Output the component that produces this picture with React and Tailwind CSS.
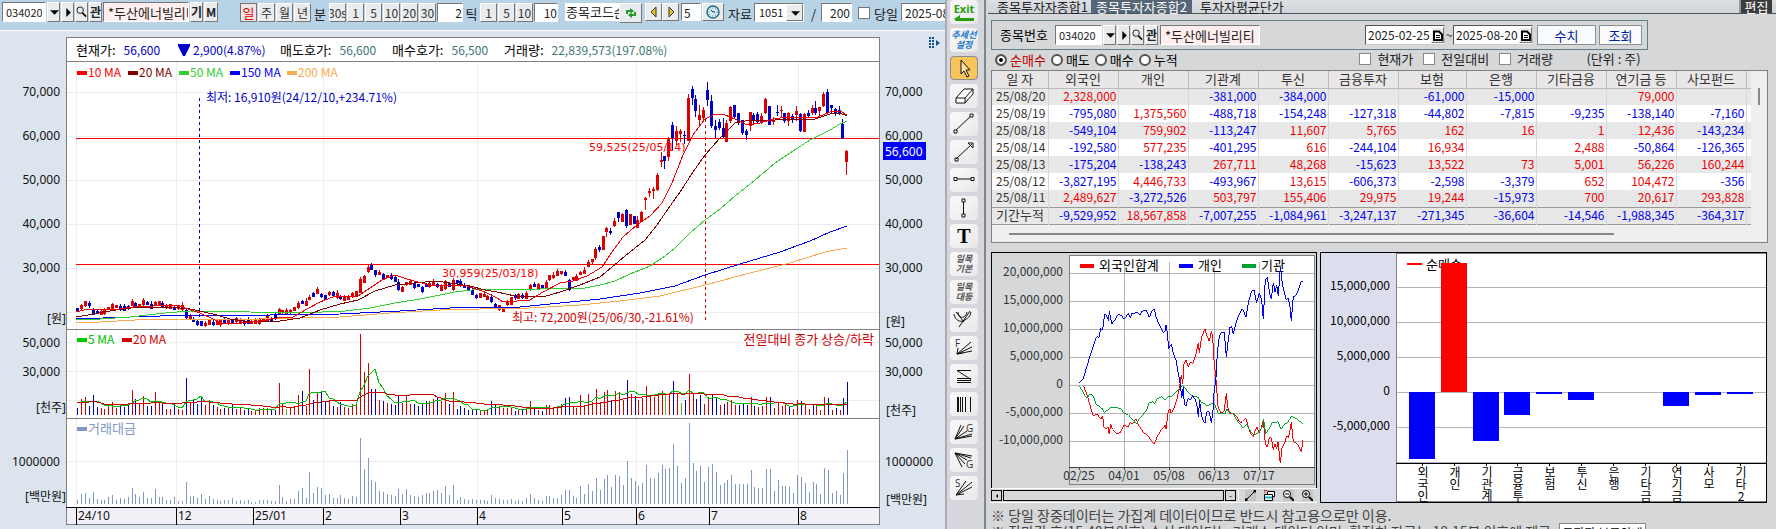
import clsx from "clsx";

const bevel =
  "flex shrink-0 items-center justify-center overflow-hidden border border-t-white border-l-white border-r-[#777] border-b-[#777] bg-[#e9ebed] leading-none";
const sunken =
  "min-w-0 shrink-0 border border-t-[#777] border-l-[#777] border-r-white border-b-white outline-none";

// one entry per session, measured in thirds of a pixel up from the pane floor
const turnover = [
  12, 30, 33, 18, 36, 15, 12, 12, 21, 27, 12, 18, 15, 21, 48, 30, 21, 36, 18, 18,
  45, 21, 21, 12, 12, 21, 9, 9, 66, 21, 24, 18, 30, 15, 24, 15, 12, 9, 12, 12,
  18, 9, 12, 9, 12, 6, 6, 12, 12, 12, 9, 9, 57, 21, 9, 15, 15, 39, 48, 18,
  96, 33, 51, 48, 27, 30, 18, 18, 27, 18, 15, 24, 21, 198, 105, 138, 72, 66, 39, 36,
  30, 27, 24, 45, 30, 45, 27, 24, 21, 27, 33, 33, 39, 42, 33, 54, 27, 57, 12, 21,
  15, 12, 15, 12, 12, 12, 9, 27, 18, 15, 12, 12, 15, 9, 12, 9, 18, 30, 18, 12,
  9, 24, 24, 18, 18, 27, 42, 42, 24, 18, 54, 30, 60, 39, 78, 42, 75, 87, 51, 87,
  84, 57, 129, 78, 69, 54, 63, 117, 78, 75, 93, 117, 105, 108, 180, 114, 63, 78, 243, 123,
  99, 114, 66, 111, 120, 96, 57, 63, 72, 87, 60, 60, 60, 60, 102, 51, 48, 48, 105, 105,
  39, 72, 54, 54, 51, 33, 87, 81, 63, 36, 66, 60, 30, 108, 102, 33, 39, 27, 93, 162,
];

const volume = [
  21, 48, 54, 27, 60, 24, 21, 18, 33, 39, 21, 27, 24, 36, 75, 48, 36, 57, 27, 27,
  69, 36, 36, 18, 18, 36, 18, 15, 111, 39, 45, 33, 54, 30, 45, 30, 24, 18, 21, 21,
  33, 18, 21, 15, 18, 12, 12, 21, 21, 21, 15, 15, 96, 36, 18, 24, 24, 60, 72, 27,
  138, 45, 66, 69, 39, 42, 27, 24, 39, 24, 21, 33, 30, 243, 129, 156, 78, 78, 45, 42,
  36, 33, 30, 60, 36, 57, 33, 33, 27, 36, 42, 42, 48, 51, 42, 66, 33, 69, 18, 27,
  21, 15, 15, 15, 15, 15, 15, 42, 30, 24, 21, 21, 21, 12, 18, 15, 24, 42, 24, 15,
  12, 30, 30, 24, 24, 33, 51, 54, 27, 21, 60, 30, 63, 39, 78, 36, 69, 75, 45, 72,
  69, 45, 105, 63, 57, 45, 51, 87, 57, 54, 60, 72, 66, 63, 102, 63, 36, 45, 123, 66,
  48, 60, 33, 54, 63, 54, 30, 33, 39, 45, 30, 30, 33, 30, 54, 27, 24, 27, 54, 54,
  21, 36, 27, 33, 24, 18, 45, 42, 30, 18, 33, 33, 15, 54, 51, 15, 21, 15, 51, 99,
];

const downDays = new Set([
  0, 3, 4, 5, 11, 12, 13, 15, 18, 19, 22, 25, 28, 30, 31, 32, 35, 38, 40, 43, 44, 50, 51,
  58, 61, 63, 64, 66, 68, 76, 77, 79, 81, 82, 83, 87, 88, 89, 90, 93, 96, 98, 99, 100, 101,
  102, 103, 107, 108, 113, 115, 118, 120, 126, 127, 138, 142, 144, 154, 157, 160, 161, 164,
  165, 167, 171, 172, 173, 175, 179, 184, 187, 190, 194, 196, 198, 199,
]);
const flatDays = new Set([54, 152, 156]);

// middle of the candle body for the quiet sessions
const quiet = [
  628, 622, 612, 615, 636, 636, 639, 635, 625, 620, 620, 624, 625, 622, 610, 612, 617, 608, 611, 618,
  611, 609, 618, 619, 618, 625, 622, 622, 643, 651, 660, 670, 672, 674, 668, 671, 669, 669, 664, 665,
  664, 661, 664, 668, 663, 666, 667, 664, 658, 655, 658, 652, 636, 636, 637, 634, 627, 617, 608, 609,
  594, 584, 576, 588, 592, 581, 582, 586, 594, 594, 594, 586, 580, 557, 538, 507, 502, 519, 521, 530,
  530, 530, 538, 559, 569, 550, 549, 557, 556, 569, 555, 555, 550, 556, 565, 552, 556, 555, 546, 550,
  558, 565, 577, 590, 586, 586, 594, 598, 618, 622, 632, 610, 602, 591, 588, 590, 588, 562, 556, 560,
  560, 555, 534, 529, 519, 517, 522, 553, 536, 534, 520, 515, 493, 482,
];
const tallQuiet = {
  28: [630, 655], 73: [537, 578], 74: [528, 549], 75: [500, 516], 76: [494, 509], 83: [545, 570],
  95: [542, 566], 97: [540, 570], 108: [612, 626], 112: [592, 616], 116: [578, 596], 121: [546, 564],
  127: [540, 570],
};

// [body top, body bottom, high, low, up]
const rally = [
  [538, 564, 530, 568, 1], [530, 538, 525, 546, 0], [498, 540, 498, 540, 1], [474, 486, 470, 500, 1],
  [483, 488, 475, 495, 0], [453, 467, 444, 472, 1], [426, 444, 426, 456, 0], [432, 456, 428, 456, 1],
  [420, 468, 416, 474, 0], [432, 465, 432, 465, 1], [438, 462, 438, 462, 0], [450, 474, 438, 474, 1],
  [426, 456, 422, 456, 1], [383, 390, 380, 420, 1], [363, 369, 353, 380, 1], [358, 365, 350, 386, 1],
  [315, 360, 308, 363, 1], [269, 276, 246, 291, 1], [258, 273, 258, 297, 0], [205, 261, 201, 272, 1],
  [165, 205, 155, 240, 0], [183, 212, 168, 225, 1], [183, 192, 178, 218, 1], [194, 198, 183, 222, 0],
  [83, 213, 72, 213, 1], [57, 84, 48, 105, 0], [87, 123, 75, 141, 0], [135, 150, 105, 165, 1],
  [120, 144, 112, 150, 1], [60, 90, 36, 108, 0], [93, 168, 75, 174, 0], [168, 180, 150, 205, 0],
  [156, 174, 147, 180, 0], [174, 200, 144, 204, 0], [159, 216, 150, 216, 1], [111, 153, 108, 158, 1],
  [105, 141, 105, 146, 0], [129, 156, 129, 165, 0], [150, 189, 150, 195, 0], [184, 195, 176, 210, 0],
  [126, 168, 126, 183, 1], [135, 150, 128, 160, 0], [132, 156, 126, 160, 0], [138, 156, 128, 162, 1],
  [87, 128, 83, 132, 1], [107, 165, 107, 165, 0], [149, 156, 142, 165, 1], [127, 130, 105, 138, 0],
  [121, 124, 108, 142, 1], [129, 153, 129, 160, 0], [129, 153, 126, 168, 1], [138, 147, 132, 160, 0],
  [124, 136, 108, 152, 1], [132, 183, 128, 186, 0], [132, 186, 129, 186, 1], [130, 138, 120, 144, 0],
  [114, 130, 105, 134, 1], [114, 130, 93, 134, 0], [112, 124, 110, 138, 1], [72, 108, 66, 112, 1],
  [66, 129, 57, 134, 0], [106, 114, 104, 130, 0], [117, 132, 114, 138, 0], [120, 130, 108, 134, 0],
  [161, 205, 147, 207, 0], [242, 276, 240, 315, 1],
];

const movingAverages = [
  {
    color: "#fda94f",
    points:
      "76,323 100,322 135,320 180,319 260,319 340,317 390,313 440,310 480,309 530,308 580,305 620,301 660,296 705,285 750,273 790,263 825,252 835,250 847,248",
  },
  {
    color: "#0000f0",
    points:
      "76,319 130,317 190,315 270,315 340,314 400,311 450,308 480,307 520,307 560,303 600,299 640,293 675,286 705,275 740,264 780,252 810,241 830,232 847,226",
  },
  {
    color: "#32cd32",
    points:
      "76,320 100,319 130,317 165,313 190,311 250,312 300,313 345,311 370,308 395,303 420,299 455,292 480,289 540,289 560,288 585,288 600,285 615,281 630,274 650,266 665,256 675,248 690,233 705,220 720,209 735,196 755,180 775,163 790,153 810,140 830,130 840,124 847,121",
  },
  {
    color: "#800000",
    points:
      "76,317 88,315 103,312 123,309 140,307 170,307 190,309 213,314 230,319 245,321 265,322 280,321 300,318 320,310 340,304 358,300 375,291 395,285 415,283 435,281 450,283 470,286 485,290 497,292 515,296 543,297 560,292 580,285 600,277 612,267 625,256 645,240 657,225 668,209 680,192 693,172 705,155 720,138 735,123 750,120 775,120 800,119 815,119 830,114 840,113 847,116",
  },
  {
    color: "#f00000",
    points:
      "76,312 88,309 98,310 120,309 133,307 153,306 167,305 180,306 188,309 200,313 213,319 222,323 240,323 260,321 277,318 293,317 307,309 320,302 333,297 347,296 358,296 370,288 382,280 395,275 410,280 430,285 450,285 467,286 485,292 497,298 503,302 517,301 530,300 543,292 560,283 573,281 587,276 602,267 612,252 623,237 637,225 650,216 662,203 672,183 683,155 693,135 705,119 715,114 725,115 735,119 747,125 760,123 773,119 788,117 803,117 818,117 830,112 840,111 847,115",
  },
];

const months = [
  [76, "24/10"], [176, "12"], [253, "25/01"], [323, "2"], [400, "3"],
  [477, "4"], [562, "5"], [636, "6"], [709, "7"], [798, "8"],
];

const axisLabels = [
  [96, "70,000"], [140, "60,000"], [184, "50,000"], [228, "40,000"], [272, "30,000"],
  [323, "[원]"], [347, "50,000"], [376, "30,000"], [412, "[천주]"], [466, "1000000"], [501, "[백만원]"],
];

const sessionX = (i) => Math.round((232 + i * 11.608) / 3);

function averageLine(values, span, floor) {
  return values
    .map((_, i) => {
      const slice = values.slice(Math.max(0, i - span + 1), i + 1);
      // the first few sessions have no history, so lean on the opening level
      const pad = Math.max(0, Math.min(span, 6) - slice.length);
      const total = slice.reduce((sum, v) => sum + v, 0) + pad * 40;
      return `${sessionX(i)},${Math.round(floor - total / (slice.length + pad) / 3)}`;
    })
    .join(" ");
}

function Candle({ x, top, bottom, high, low, up }) {
  const color = up ? "#dc0000" : "#0000c8";
  return (
    <g fill={color}>
      <rect x={x} y={Math.round(high)} width="1" height={Math.max(1, Math.round(low - high))} />
      <rect x={x - 1} y={Math.round(top)} width="3" height={Math.max(1, Math.round(bottom - top))} />
    </g>
  );
}

function StockChart() {
  return (
    <svg
      viewBox="0 61 945 468"
      className="block w-full"
      fontFamily="'Noto Sans', 'Noto Sans CJK KR', sans-serif"
      fontSize="12"
      role="img"
      aria-label="두산에너빌리티 일봉 차트"
    >
      <g shapeRendering="crispEdges">
        <rect x="66" y="61" width="814" height="447" fill="#fff" />
        <rect x="66" y="507" width="814" height="18" fill="#f0f0f6" />
        <g stroke="#ededed">
          {[76, 176, 323, 477, 636, 798].map((x) => (
            <path key={x} d={`M${x + 0.5} 62V507`} />
          ))}
          {[92, 136, 180, 224, 268, 312, 342, 371, 400, 461].map((y) => (
            <path key={y} d={`M67 ${y + 0.5}H879`} />
          ))}
        </g>
        <path d="M66.5 61V525M879.5 61V525M66 61.5H880M66 329.5H880M66 418.5H880M66 524.5H880" stroke="#808080" fill="none" />
        <path d="M66 507.5H880" stroke="#000" />
        <path d="M199.5 98V320" stroke="#0000c8" strokeDasharray="3 3" />
        <path d="M76 138.5H879M76 264.5H879" stroke="#f00" />

        {quiet.map((mid, i) => {
          const half = 4 + ((i * 7) % 5);
          const [top, bottom] = tallQuiet[i] || [mid - half, mid + half];
          return (
            <Candle
              key={i}
              x={sessionX(i)}
              top={100 + top / 3}
              bottom={100 + bottom / 3}
              high={100 + (top - ((i * 5) % 8)) / 3}
              low={100 + (bottom + ((i * 3) % 6)) / 3}
              up={!downDays.has(i)}
            />
          );
        })}
        {rally.map(([top, bottom, high, low, up], i) => (
          <Candle
            key={i}
            x={sessionX(i + quiet.length) - 1}
            top={70 + top / 3}
            bottom={70 + bottom / 3}
            high={70 + high / 3}
            low={70 + low / 3}
            up={up}
          />
        ))}
        {movingAverages.map((line) => (
          <polyline key={line.color} points={line.points} fill="none" stroke={line.color} />
        ))}
        <path d="M705.5 119V320" stroke="#c80000" strokeDasharray="3 3" />

        {volume.map((v, i) => (
          <rect
            key={i}
            x={sessionX(i)}
            y={Math.round(415 - v / 3)}
            width="1"
            height={Math.round(v / 3)}
            fill={flatDays.has(i) ? "#55bb22" : downDays.has(i) ? "#0000b4" : "#d20000"}
          />
        ))}
        <polyline points={averageLine(volume, 5, 415)} fill="none" stroke="#00c000" />
        <polyline points={averageLine(volume, 20, 415)} fill="none" stroke="#d20000" />
        {turnover.map((v, i) => (
          <rect key={i} x={sessionX(i)} y={Math.round(504 - v / 3)} width="1" height={Math.round(v / 3)} fill="#8098c4" />
        ))}

        {[
          [77, "#f00"], [128, "#800000"], [179, "#32cd32"], [230, "#00f"], [287, "#fda94f"],
        ].map(([x, color]) => (
          <rect key={x} x={x} y="71" width="10" height="4" fill={color} />
        ))}
        <rect x="77" y="338" width="10" height="4" fill="#00c800" />
        <rect x="122" y="338" width="10" height="4" fill="#d20000" />
        <rect x="77" y="427" width="10" height="4" fill="#8098c4" />
        {months.map(([x]) => (
          <path key={x} d={`M${x + 0.5} 507V525`} stroke="#000" />
        ))}
      </g>

      <g fontFamily="'Noto Sans CJK KR', sans-serif" fontSize="12">
        <text x="88" y="77" fill="#f00">10 MA</text>
        <text x="139" y="77" fill="#800000">20 MA</text>
        <text x="190" y="77" fill="#32cd32">50 MA</text>
        <text x="241" y="77" fill="#00f">150 MA</text>
        <text x="298" y="77" fill="#fda94f">200 MA</text>
        <text x="206" y="102" fill="#0000c8">최저: 16,910원(24/12/10,+234.71%)</text>
        <text x="512" y="322" fill="#d20000">최고: 72,200원(25/06/30,-21.61%)</text>
        <text x="88" y="344" fill="#00c000">5 MA</text>
        <text x="133" y="344" fill="#d20000">20 MA</text>
        <text x="874" y="344" fill="#d20000" fontSize="13" textAnchor="end">전일대비 종가 상승/하락</text>
        <text x="88" y="433" fill="#8098c4" fontSize="13">거래대금</text>
      </g>
      <g fontFamily="'DejaVu Sans', sans-serif" fontSize="11" fill="#f00">
        <text x="589" y="151">59,525(25/05/14)</text>
        <text x="442" y="277">30,959(25/03/18)</text>
      </g>

      {axisLabels.map(([y, label]) => (
        <g key={y} fill="#111">
          <text x={label.startsWith("[") ? 66 : 60} y={y} textAnchor="end">{label}</text>
          <text x={label.startsWith("[") ? 886 : 885} y={label.startsWith("[") ? y + 3 : y}>{label}</text>
        </g>
      ))}
      <rect x="883" y="142" width="43" height="18" fill="#00f" />
      <text x="885" y="156" fill="#fff">56,600</text>
      {months.map(([x, label]) => (
        <text key={x} x={x + 2} y="520" fill="#111">{label}</text>
      ))}
    </svg>
  );
}

function Search() {
  return (
    <svg viewBox="0 0 12 14" className="h-3.5 w-3" fill="none" stroke="#111">
      <circle cx="4.5" cy="5" r="3.5" />
      <path d="M7 8l4 4" strokeWidth="2" />
    </svg>
  );
}

function Arrow({ d }) {
  return (
    <svg viewBox="0 0 9 9" className="size-2.5 shrink-0" fill="#000">
      <path d={d} />
    </svg>
  );
}
const DOWN = "M1 3h8L5 7z";
const RIGHT = "M3 1v8l4-4z";

function CodeField({ inputClass, buttonClass }) {
  return (
    <>
      <input aria-label="종목코드" defaultValue="034020" className={clsx(sunken, inputClass, "bg-white px-[3px] text-[11px]")} />
      <button aria-label="최근 종목" className={clsx(bevel, buttonClass)}><Arrow d={DOWN} /></button>
      <button aria-label="다음 종목" className={clsx(bevel, buttonClass)}><Arrow d={RIGHT} /></button>
      <button aria-label="종목 검색" className={clsx(bevel, buttonClass)}><Search /></button>
      <button className={clsx(bevel, buttonClass, "text-xs font-bold")}>관</button>
    </>
  );
}

function TopBar() {
  const key = clsx(bevel, "h-[19px] w-[17px] border-r-[#555] border-b-[#555] text-xs text-[#333]");
  return (
    <div className="flex h-[31px] shrink-0 items-start overflow-hidden border-b border-white bg-[#b8d3e6] pt-[2px] pl-[2px] text-[13px] text-[#222]">
      <div className="flex shrink-0 gap-px">
        <CodeField inputClass="h-5 w-[44px]" buttonClass="h-5 w-[13px]" />
        <input aria-label="종목명" defaultValue="*두산에너빌리티" className={clsx(sunken, "h-5 w-[86px] bg-[#ffeeee] pl-1")} />
        <button className={clsx(bevel, "h-5 w-[13px] text-xs font-bold")}>기</button>
        <button className={clsx(bevel, "h-5 w-[14px] text-xs font-bold")}>M</button>
      </div>
      <div className="ml-[22px] flex shrink-0 gap-px pt-px">
        <button className="flex h-[19px] w-[17px] items-center justify-center border border-[#777] bg-[#f4e4e6] text-[13px] leading-none text-[#e00000]">일</button>
        {["주", "월", "년"].map((unit) => (
          <button key={unit} className={key}>{unit}</button>
        ))}
        <span className="w-4 text-center leading-[22px]">분</span>
        {["30s", "1", "5", "10", "20", "30"].map((unit) => (
          <button key={unit} className={key}>{unit}</button>
        ))}
        <input aria-label="분" defaultValue="2" className={clsx(sunken, "h-[19px] w-[26px] bg-white text-right text-xs")} />
        <span className="w-[15px] text-center leading-[22px]">틱</span>
        {["1", "5", "10"].map((unit) => (
          <button key={unit} className={key}>{unit}</button>
        ))}
        <input aria-label="틱" defaultValue="10" className={clsx(sunken, "h-[19px] w-[24px] bg-white text-right text-xs")} />
      </div>
      <div className="ml-[7px] flex shrink-0 items-start pt-px">
        <input aria-label="종목코드순" defaultValue="종목코드순" className="h-[18px] w-[54px] shrink-0 bg-white pl-px text-[13px] outline-none" />
        <button aria-label="새로고침" className={clsx(bevel, "h-5 w-[23px] border-r-[#222] border-b-[#222]")}>
          <svg viewBox="0 0 12 12" className="size-3" fill="none" stroke="#259a2c" strokeWidth="2">
            <path d="M2 7V4h4M10 5v3H6" />
            <path d="M5 1l4 3-4 3zM7 5L3 8l4 3z" fill="#259a2c" stroke="none" />
          </svg>
        </button>
        <button aria-label="이전" className={clsx(bevel, "ml-[3px] h-[18px] w-[17px] border-r-[#222] border-b-[#222]")}>
          <svg viewBox="0 0 10 12" className="h-3 w-2.5" fill="#e8c030" stroke="#333"><path d="M7 1v10L2 6z" /></svg>
        </button>
        <button aria-label="다음" className={clsx(bevel, "h-[18px] w-[17px] border-r-[#222] border-b-[#222]")}>
          <svg viewBox="0 0 10 12" className="h-3 w-2.5" fill="#e8c030" stroke="#333"><path d="M3 1v10l5-5z" /></svg>
        </button>
        <input aria-label="간격" defaultValue="5" className={clsx(sunken, "ml-[2px] h-[18px] w-5 bg-white pl-[2px] text-xs")} />
        <button aria-label="시간" className={clsx(bevel, "ml-px h-[18px] w-[22px] border-r-[#222] border-b-[#222]")}>
          <svg viewBox="0 0 14 14" className="size-3.5" fill="#d8eef8" stroke="#27708c">
            <circle cx="7" cy="7" r="6" strokeWidth="1.5" />
            <circle cx="7" cy="7" r="4" strokeDasharray="1 2" />
            <path d="M5 5l2 2h2" stroke="#222" />
          </svg>
        </button>
        <label htmlFor="bars" className="ml-1 w-[25px] leading-[22px]">자료</label>
        <div className="ml-px flex h-[19px] w-[50px] shrink-0 border border-t-[#777] border-l-[#777] border-white bg-white">
          <select id="bars" defaultValue="1051" className="min-w-0 flex-1 appearance-none pl-1 text-[11px] outline-none">
            <option>1051</option>
          </select>
          <span className={clsx(bevel, "w-[17px] border-r-[#555] border-b-[#555]")}><Arrow d={DOWN} /></span>
        </div>
        <span className="ml-[7px] w-2.5 leading-[22px]">/</span>
        <input aria-label="표시 개수" defaultValue="200" className={clsx(sunken, "h-[19px] w-[31px] bg-white pr-px text-right text-xs")} />
        <input id="today" type="checkbox" className="mt-1 ml-[6px] size-3 shrink-0 appearance-none border border-[#777] bg-white" />
        <label htmlFor="today" className="ml-[4px] w-[27px] leading-[22px]">당일</label>
        <input aria-label="기준일" defaultValue="2025-08-20" className={clsx(sunken, "h-[18px] w-20 bg-white pl-[3px] text-xs")} />
      </div>
    </div>
  );
}

function Quote({ label, value, className }) {
  return (
    <span className={className}>
      {label}:<span className="ml-2 text-xs text-[#3d7575]">{value}</span>
    </span>
  );
}

function ChartPanel() {
  return (
    <section className="flex min-w-0 flex-[945] flex-col bg-[#dce4ed]">
      <TopBar />
      <div className="mt-[6px] flex shrink-0">
        <div className="ml-[66px] flex h-6 min-w-0 flex-1 items-center overflow-hidden border border-b-0 border-[#808080] bg-white pl-[9px] text-[13px] whitespace-nowrap text-black">
          <span className="w-[102px]">
            현재가:<span className="ml-2 text-xs text-[#0000c8]">56,600</span>
          </span>
          <span className="flex w-[102px] items-center gap-[3px] text-xs text-[#0000c8]">
            <svg viewBox="0 0 12 14" className="h-3.5 w-3" fill="currentColor"><path d="M0 1h12v2L7 13H5L0 3z" /></svg>
            2,900(4.87%)
          </span>
          <Quote label="매도호가" value="56,600" className="w-[112px]" />
          <Quote label="매수호가" value="56,500" className="w-[112px]" />
          <Quote label="거래량" value="22,839,573(197.08%)" />
        </div>
        <div className="flex w-[65px] shrink-0 items-start justify-end pr-[5px]">
          <svg viewBox="0 0 11 12" className="h-3 w-[11px]" fill="#10558c">
            {[0, 3, 6, 9].map((y) => (
              <path key={y} d={`M0 ${y}h2v2H0zM3 ${y}h2v2H3z`} />
            ))}
            <path d="M7 3v6l4-3z" />
          </svg>
        </div>
      </div>
      <StockChart />
    </section>
  );
}

const tools = [
  { name: "추세선", draw: <><path d="M5 19L22 3" /><path d="M4 18h3v3H4zM20 2h3v3h-3z" fill="#fff" /></> },
  { name: "화살표", draw: <path d="M6 19L22 4M18 3h5v5zM5 18h3v3H5z" fill="#fff" /> },
  { name: "수평선", draw: <><path d="M4 11h18" /><path d="M4 9.500h3v3H4zM21 9.500h3v3h-3z" fill="#fff" /></> },
  { name: "수직선", draw: <><path d="M13.500 4v17" /><path d="M12 3h3v3h-3zM12 18h3v3h-3z" fill="#fff" /></> },
];

const fans = [
  { name: "피치포크", draw: <path d="M9 19L20 3M6 4l8 10M4 6c1 7 7 8 9 7s7-3 8-9M8 4c0 6 7 8 9 0" /> },
  { name: "피보나치 팬", letter: ["F", 5, 11], draw: <path d="M7 18L21 6M7 18l15-7M7 18l15-3M7 18l1-6M7 18l6-1" /> },
  { name: "피보나치 되돌림", draw: <path d="M7 6.500h14M7 6.500l14 9M7 14.500h14M7 16.500h14M7 18.500h14" /> },
  { name: "피보나치 시간대", draw: <><path d="M8 5v15" strokeWidth="2" /><path d="M10.500 5v15M12.500 5v15M15.500 5v15M20.500 5v15" /></> },
  { name: "갠 팬 상승", letter: ["G", 16, 12], draw: <path d="M5 19L11 5M5 19L14 6M5 19L17 11M5 19l17-5M5 19l17-3" /> },
  { name: "갠 팬 하락", letter: ["G", 16, 20], draw: <path d="M5 5l7 14M5 5l10 11M5 5l12 7M5 5l16 5M5 5l17 3" /> },
  { name: "스피드라인", letter: ["S", 5, 11], draw: <path d="M6 19L16 5M6 19L22 6M6 19l16-8M6 19l8-1" /> },
];

function Tool({ name, active, children }) {
  return (
    <button
      aria-label={name}
      className={clsx(
        "flex h-6 w-[28px] shrink-0 items-center justify-center overflow-hidden rounded-sm",
        active ? "border border-[#8a8a92] bg-[#f8c45c]" : "bg-linear-to-br from-[#fafafa] to-[#e8e8ea]"
      )}
    >
      {children}
    </button>
  );
}

function Glyph({ letter, children }) {
  return (
    <svg viewBox="0 0 28 24" className="h-6 w-[28px] shrink-0" fill="none" stroke="#111">
      {children}
      {letter && (
        <text x={letter[1]} y={letter[2]} fontSize="10" fill="#333" stroke="none" fontFamily="'Open Sans', sans-serif">
          {letter[0]}
        </text>
      )}
    </svg>
  );
}

function ToolStrip() {
  return (
    <nav className="flex w-[39px] shrink-0 flex-col items-center gap-1 border-l-2 border-[#a8acb4] bg-[#d6d6dc] pr-[3px]">
      <Tool name="Exit">
        <span className="flex flex-col items-center font-['Open_Sans',sans-serif] text-[11px] leading-3 font-bold text-[#24a008]">
          Exit
          <svg viewBox="0 0 20 6" className="h-1.5 w-5" fill="currentColor"><path d="M0 4l6-4v3h14v3H2z" /></svg>
        </span>
      </Tool>
      <Tool name="추세선 설정">
        <span className="text-[9px] leading-[10px] font-bold text-[#1678cc] italic">추세선<br />설정</span>
      </Tool>
      <Tool name="선택" active>
        <Glyph><path d="M11 4v14l3-3 3 6 2-1-3-6h4z" fill="#ffe2a0" /></Glyph>
      </Tool>
      <Tool name="지우개">
        <Glyph><path d="M6 14L14 5h9l-8 9zM6 14v5h9v-5M15 19l8-9V5" fill="#fff" /></Glyph>
      </Tool>
      {tools.map((tool) => (
        <Tool key={tool.name} name={tool.name}><Glyph>{tool.draw}</Glyph></Tool>
      ))}
      <Tool name="문자"><span className="font-['Liberation_Serif',serif] text-xl font-bold text-black">T</span></Tool>
      <Tool name="일목 기본"><span className="text-[9px] leading-[10px] font-bold text-[#555] italic">일목<br />기본</span></Tool>
      <Tool name="일목 대등"><span className="text-[9px] leading-[10px] font-bold text-[#555] italic">일목<br />대등</span></Tool>
      {fans.map((tool) => (
        <Tool key={tool.name} name={tool.name}><Glyph letter={tool.letter}>{tool.draw}</Glyph></Tool>
      ))}
    </nav>
  );
}

const investors = ["외국인", "개인", "기관계", "투신", "금융투자", "보험", "은행", "기타금융", "연기금 등", "사모펀드"];

const flows = [
  ["25/08/20", "2,328,000", "", "-381,000", "-384,000", "", "-61,000", "-15,000", "", "79,000", ""],
  ["25/08/19", "-795,080", "1,375,560", "-488,718", "-154,248", "-127,318", "-44,802", "-7,815", "-9,235", "-138,140", "-7,160"],
  ["25/08/18", "-549,104", "759,902", "-113,247", "11,607", "5,765", "162", "16", "1", "12,436", "-143,234"],
  ["25/08/14", "-192,580", "577,235", "-401,295", "616", "-244,104", "16,934", "", "2,488", "-50,864", "-126,365"],
  ["25/08/13", "-175,204", "-138,243", "267,711", "48,268", "-15,623", "13,522", "73", "5,001", "56,226", "160,244"],
  ["25/08/12", "-3,827,195", "4,446,733", "-493,967", "13,615", "-606,373", "-2,598", "-3,379", "652", "104,472", "-356"],
  ["25/08/11", "2,489,627", "-3,272,526", "503,797", "155,406", "29,975", "19,244", "-15,973", "700", "20,617", "293,828"],
  ["기간누적", "-9,529,952", "18,567,858", "-7,007,255", "-1,084,961", "-3,247,137", "-271,345", "-36,604", "-14,546", "-1,988,345", "-364,317"],
];

function FlowTable() {
  return (
    <div className="mr-2 ml-[3px] h-[173px] shrink-0 overflow-hidden border border-[#808080] bg-[#efefef]">
      <div className="flex">
        <table className="min-w-0 flex-1 table-fixed border-collapse bg-white text-xs whitespace-nowrap">
          <colgroup>
            <col className="w-[56px]" />
            {investors.map((name) => (
              <col key={name} className={name === "보험" ? "w-[68px]" : "w-[70px]"} />
            ))}
            <col className="w-[5px]" />
          </colgroup>
          <thead>
            <tr className="h-[17px] bg-[#e8e6e6] text-[13px] leading-[15px] text-[#333]">
              {["일 자", ...investors].map((name) => (
                <th key={name} className="border-r border-b border-[#bbb] p-0 pb-px font-normal">{name}</th>
              ))}
              <th className="border-b border-[#bbb] p-0" />
            </tr>
          </thead>
          <tbody>
            {flows.map(([date, ...values], row) => (
              <tr
                key={date}
                className={clsx(
                  "h-[17px] leading-[14px]",
                  row === 7 && "border-t border-b border-[#999]",
                  row % 2 && row !== 7 ? "bg-white" : "bg-[#e8e8e8]"
                )}
              >
                <th
                  className={clsx(
                    "border-r border-[#d8d8d8] p-0 pb-[2px] pl-1 text-left font-normal text-[#333]",
                    row === 7 && "text-[13px]"
                  )}
                >
                  {date}
                </th>
                {values.map((value, i) => (
                  <td
                    key={i}
                    className={clsx(
                      "border-r border-[#d8d8d8] p-0 pr-px pb-[2px] text-right",
                      value.startsWith("-") ? "text-[#0000ee]" : "text-[#f00000]"
                    )}
                  >
                    {value}
                  </td>
                ))}
                <td className="p-0" />
              </tr>
            ))}
          </tbody>
        </table>
        <div className="flex w-4 shrink-0 justify-center pt-[17px]">
          <div className="h-[17px] w-[2px] bg-[#888]" />
        </div>
      </div>
      <div className="mt-[8px] ml-[17px] h-[2px] w-[78%] bg-[#888]" />
    </div>
  );
}

// traces are plotted three units to the pixel
const trend = {
  blue: "298,430 310,415 325,365 340,318 350,290 357,292 362,265 368,270 374,222 380,228 386,242 388,212 395,252 405,240 415,222 425,228 432,238 440,228 445,220 451,234 456,220 475,218 480,226 485,214 498,210 508,232 515,215 523,206 528,230 538,255 550,277 555,275 558,256 562,278 566,326 574,312 580,340 588,360 595,400 602,440 605,475 610,440 613,493 618,497 625,475 632,480 638,465 645,478 650,490 655,530 659,480 662,510 668,540 675,550 680,515 688,515 694,548 700,505 703,440 707,430 712,340 718,290 725,277 733,277 739,350 745,300 750,262 755,260 760,282 768,250 775,228 785,208 790,210 798,232 806,185 815,152 822,150 830,188 838,160 845,178 850,238 856,118 862,112 870,165 874,176 880,128 885,155 890,135 895,168 901,80 908,138 918,178 925,175 930,200 934,243 940,170 948,166 957,145 964,124 969,124",
  red: "310,438 320,460 328,490 340,527 352,522 358,532 364,536 368,528 372,562 378,568 384,560 388,583 392,552 398,568 412,582 420,578 432,556 445,560 450,548 458,550 468,538 476,555 490,578 502,585 515,604 523,612 532,590 545,568 556,555 558,568 565,512 570,508 573,520 580,508 590,482 598,445 604,404 608,432 612,372 618,360 625,380 632,365 638,372 648,342 655,308 658,340 665,290 675,268 682,290 688,304 694,274 698,290 702,360 709,430 714,498 722,518 732,515 739,460 744,505 750,522 760,520 768,528 775,538 782,550 788,542 798,536 805,560 812,580 820,590 826,570 832,560 836,580 843,568 850,538 856,612 862,622 868,592 874,594 880,630 885,612 890,628 894,605 901,670 906,625 915,605 920,588 926,592 930,570 934,545 940,605 950,610 958,622 964,636 969,600",
  green:
    "298,438 310,458 320,475 330,462 340,468 348,492 358,500 366,505 374,518 385,508 395,502 410,502 425,508 432,520 445,524 455,536 465,548 470,550 475,540 485,530 500,510 508,488 518,486 524,492 532,476 545,470 555,480 565,470 575,468 588,455 600,445 608,436 618,448 632,465 645,470 655,472 662,485 672,490 682,498 695,490 705,495 715,520 735,522 740,506 748,518 760,520 770,540 780,552 790,565 800,552 812,575 822,585 835,578 845,565 851,538 857,582 868,565 876,548 885,548 895,545 902,568 912,555 925,545 935,528 945,534 955,540 969,552",
};

function TrendChart() {
  const levels = ["20,000,000", "15,000,000", "10,000,000", "5,000,000", "0", "-5,000,000", "-10,000,000"];
  const dates = ["02/25", "04/01", "05/08", "06/13", "07/17"];
  return (
    <svg viewBox="991 252 326 236" className="block w-full" fontSize="12" role="img" aria-label="투자자별 누적 추이">
      <g shapeRendering="crispEdges" fill="none">
        <path d="M991.5 488V252.5H1316.5V488" stroke="#000" />
        <rect x="1070" y="256" width="244" height="211" fill="#fff" />
        {levels.map((level, i) => (
          <path key={level} d={`M1070 ${273.5 + i * 28}H1314`} stroke="#b4b4b4" />
        ))}
        {[1124, 1169, 1214, 1259].map((x) => (
          <path key={x} d={`M${x + 0.5} 262V470`} stroke="#b4b4b4" />
        ))}
        <rect x="1069.5" y="255.5" width="245" height="229" stroke="#808080" />
        <path d="M1069 467.5H1315M1079.5 467V470M1124.5 467V470M1169.5 467V470M1214.5 467V470M1259.5 467V470" stroke="#444" />
        <path d="M1080 266h14" stroke="#f00" strokeWidth="4" />
        <path d="M1179 266h14" stroke="#00f" strokeWidth="4" />
        <path d="M1242 266h14" stroke="#00a030" strokeWidth="4" />
        <g transform="translate(980 240) scale(.3333)" strokeWidth="3">
          <polyline points={trend.red} stroke="#f00" />
          <polyline points={trend.green} stroke="#00a030" />
        </g>
      </g>
      <g fontSize="13" fill="#000">
        <text x="1099" y="270">외국인합계</text>
        <text x="1198" y="270">개인</text>
        <text x="1261" y="270">기관</text>
      </g>
      <polyline
        points={trend.blue}
        transform="translate(980 240) scale(.3333)"
        strokeWidth="3"
        stroke="#00f"
        fill="none"
        shapeRendering="crispEdges"
      />
      {levels.map((level, i) => (
        <text key={level} x="1063" y={276 + i * 28} textAnchor="end" fill="#333">{level}</text>
      ))}
      {dates.map((date, i) => (
        <text key={date} x={1079 + i * 45} y="480" textAnchor="middle" fill="#333">{date}</text>
      ))}
    </svg>
  );
}

const netBuys = [
  ["외국인", 457, 657], ["개인", 69, 457], ["기관계", 457, 603], ["금융투", 457, 525],
  ["보험", 457, 462], ["투신", 457, 480], ["은행", 457, 457], ["기타금", 457, 457],
  ["연기금", 457, 498], ["사모", 457, 465], ["기타2", 457, 462],
];

function NetBuyChart() {
  return (
    <svg viewBox="1320 252 447 251" className="block w-full" fontSize="12" role="img" aria-label="투자자별 순매수">
      <g shapeRendering="crispEdges">
        <rect x="1320" y="252" width="447" height="251" fill="#dcdeee" />
        <rect x="1396" y="253" width="370" height="249" fill="#fff" />
        {[287, 322, 357, 392, 427, 462].map((y) => (
          <path key={y} d={`M1396 ${y + 0.5}H1766`} stroke="#b4b4b4" />
        ))}
        <path d="M1396.5 253V502M1396 253.5H1766M1396 501.5H1766" stroke="#808080" />
        <path d="M1396 463.5H1766" stroke="#000" />
        <path d="M1407 264h15" stroke="#f00" strokeWidth="2" />
      </g>
      <text x="1426" y="269" fontSize="13">순매수</text>
      {netBuys.map(([name, top, bottom], i) => {
        const x = Math.round(1409 + i * 31.8);
        return (
          <g key={name}>
            <rect
              x={x}
              y={Math.round(240 + top / 3)}
              width="26"
              height={Math.round((bottom - top) / 3)}
              fill={top < 457 ? "#f00" : "#00f"}
            />
            <path d={`M${x + 13.5} 463v3`} stroke="#000" />
            {[...name].map((char, line) => (
              <text key={line} x={x + 14} y={477 + line * 12} textAnchor="middle">{char}</text>
            ))}
          </g>
        );
      })}
      {["15,000,000", "10,000,000", "5,000,000", "0", "-5,000,000"].map((level, i) => (
        <text key={level} x="1390" y={290 + i * 35} textAnchor="end">{level}</text>
      ))}
      <rect x="1320.5" y="252.5" width="446" height="250" fill="none" stroke="#000" shapeRendering="crispEdges" />
    </svg>
  );
}

function ChartScroll() {
  return (
    <div className="flex h-[15px] items-center border-t border-b border-white">
      <button aria-label="왼쪽" className="flex h-[11px] w-[11px] items-center justify-center border border-black">
        <svg viewBox="0 0 4 4" className="size-1"><path d="M3 0v4L1 2z" /></svg>
      </button>
      <div className="ml-px h-[11px] min-w-0 flex-1 border border-black" />
      <button aria-label="축소" className="ml-px flex h-[11px] w-[11px] items-center justify-center border border-black text-[9px] leading-none">-</button>
      <div className="ml-[2px] flex w-[79px] items-center justify-between border-l border-white pl-[6px] pr-1">
        <svg viewBox="0 0 11 11" className="size-[11px] bg-[#c4c4c4]" stroke="#000"><path d="M1 10l9-9" /><path d="M0 9h2v2H0zM9 0h2v2H9z" /></svg>
        <svg viewBox="0 0 11 11" className="size-[11px] bg-[#c4c4c4]" fill="#fff" stroke="#000"><path d="M3.500 1.500h7v5h-7z" /><path d="M.5 4.500h8v6h-8z" /><path d="M1 7.500h7" stroke="#2ac" strokeWidth="2" /><path d="M0 3V.5h3" stroke="#d22" fill="none" /></svg>
        {["M2 4h4", "M2 4h4M4 2v4"].map((mark) => (
          <svg key={mark} viewBox="0 0 11 11" className="size-[11px] bg-[#c4c4c4]" fill="#fff" stroke="#000">
            <circle cx="4" cy="4" r="3.5" />
            <path d={mark} />
            <path d="M7 7l4 4" strokeWidth="2" />
          </svg>
        ))}
      </div>
    </div>
  );
}

function DateField({ label, value }) {
  return (
    <span className="flex h-5 w-20 shrink-0 items-center border border-t-[#555] border-l-[#555] border-[#ccc] bg-white">
      <input aria-label={label} defaultValue={value} className="min-w-0 flex-1 pl-[2px] text-xs outline-none" />
      <button aria-label={`${label} 달력`} className={clsx(bevel, "h-4 w-[13px]")}>
        <svg viewBox="0 0 10 11" className="h-[11px] w-2.5" fill="#fff" stroke="#000"><path d="M1 1.500h5l3 3v5.500H1z" strokeWidth="2" /><path d="M3 5.500h4M3 7.500h4" /></svg>
      </button>
    </span>
  );
}

function InvestorPanel() {
  return (
    <section className="flex min-w-0 flex-[788] flex-col border-l-2 border-[#7c8690] bg-[#d5d7d9] pl-[2px] text-[13px] text-[#222]">
      <div className="flex h-3.5 shrink-0 items-end border-b border-[#445560] bg-linear-to-b from-[#dcdfe3] to-[#d0d4d8] pl-[6px] leading-[13px]">
        <button className="w-[97px] px-[3px] text-left">종목투자자종합1</button>
        <button className="w-[101px] bg-[#566676] text-center text-white">종목투자자종합2</button>
        <button className="px-2">투자자평균단가</button>
        <button className="mr-1 ml-auto w-[33px] border-l-2 border-[#999] bg-[#3c3c3c] text-white">편집</button>
      </div>
      <div className="mt-1.5 mr-[128px] ml-[3px] flex h-[30px] shrink-0 items-center overflow-hidden border border-[#5f7f88] pl-2 whitespace-nowrap">
        <span className="w-[55px] text-black">종목번호</span>
        <div className="flex shrink-0 gap-px">
          <CodeField inputClass="h-5 w-[47px]" buttonClass="h-5 w-[13px]" />
          <input aria-label="종목명" defaultValue="*두산에너빌리티" className={clsx(sunken, "ml-px h-5 w-[100px] bg-[#ffeeee] pl-1")} />
        </div>
        <div className="mr-[5px] ml-auto flex shrink-0 items-center">
          <DateField label="시작일" value="2025-02-25" />
          <span className="w-2 text-center text-xs">~</span>
          <DateField label="종료일" value="2025-08-20" />
          <button className="ml-1 h-5 w-[59px] border border-[#8a8f94] bg-[#fafbfd] leading-none text-[#0020a0]">수치</button>
          <button className="ml-[3px] h-5 w-[43px] border border-[#8a8f94] bg-[#fafbfd] leading-none text-[#0020a0]">조회</button>
        </div>
      </div>
      <div className="mr-[130px] ml-[7px] flex h-5 shrink-0 items-center whitespace-nowrap">
        {["순매수", "매도", "매수", "누적"].map((name, i) => (
          <label key={name} className={clsx("mr-[5px] flex items-center gap-[3px]", i === 0 ? "text-[#c00000]" : "text-black")}>
            <input
              type="radio"
              name="side"
              defaultChecked={i === 0}
              className="size-3 appearance-none rounded-full border-2 border-[#555] bg-white checked:bg-black checked:shadow-[inset_0_0_0_2px_white]"
            />
            {name}
          </label>
        ))}
        <div className="ml-auto flex items-center pb-[2px]">
          {["현재가", "전일대비", "거래량"].map((name) => (
            <label key={name} className="mr-[10px] flex items-center gap-[6px]">
              <input type="checkbox" className="size-3 appearance-none border border-[#888] bg-white" />
              {name}
            </label>
          ))}
          <span className="ml-[18px] w-[65px] text-center">(단위 : 주)</span>
        </div>
      </div>
      <FlowTable />
      <div className="mt-[9px] mr-[9px] ml-[3px] flex shrink-0 gap-[3px]">
        <div className="min-w-0 flex-[326]">
          <TrendChart />
          <ChartScroll />
        </div>
        <div className="min-w-0 flex-[447]">
          <NetBuyChart />
        </div>
      </div>
      <div className="mt-[4px] ml-[3px] shrink-0 text-sm leading-4 whitespace-nowrap text-[#444]">
        <p>※ 당일 장중데이터는 가집계 데이터이므로 반드시 참고용으로만 이용.</p>
        <div className="flex">
          <p className="w-[568px]">※ 장마감 후(15:40분이후) 수신 데이터는 거래소 데이터 이며, 확정치 자료는 18:15분 이후에 제공.</p>
          <button className="h-5 w-[87px] border border-[#888] bg-white text-xs leading-none text-black">투자자 분류안내</button>
        </div>
      </div>
    </section>
  );
}

export default function App() {
  return (
    <main className="flex h-screen overflow-hidden bg-[#d5d7d9] font-['Noto_Sans_CJK_KR',sans-serif]">
      <ChartPanel />
      <ToolStrip />
      <InvestorPanel />
    </main>
  );
}
